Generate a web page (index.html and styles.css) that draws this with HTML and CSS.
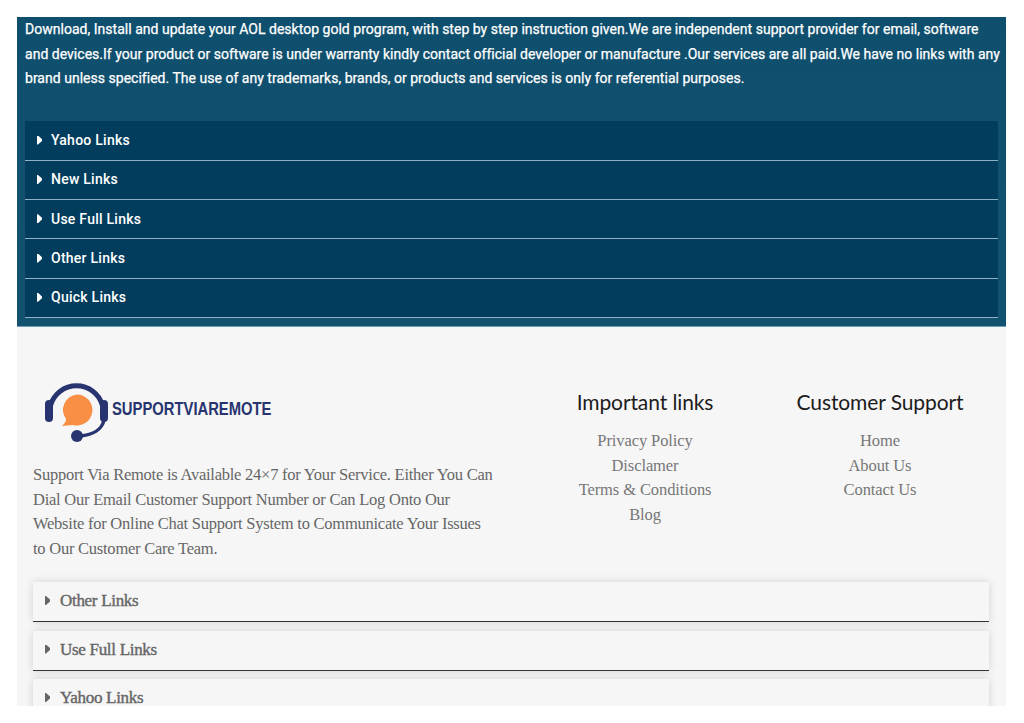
FILE: index.html
```html
<!DOCTYPE html>
<html lang="en">
<head>
<meta charset="utf-8">
<title>Support Via Remote</title>
<link rel="stylesheet" href="styles.css">
</head>
<body>
<div class="page">
  <section class="notice">
    <p class="notice-text">Download, Install and update your AOL desktop gold program, with step by step instruction given.We are independent support provider for email, software and devices.If your product or software is under warranty kindly contact official developer or manufacture .Our services are all paid.We have no links with any brand unless specified. The use of any trademarks, brands, or products and services is only for referential purposes.</p>
    <div class="dark-acc">
      <div class="dark-item"><span class="caret"></span>Yahoo Links</div>
      <div class="dark-item"><span class="caret"></span>New Links</div>
      <div class="dark-item"><span class="caret"></span>Use Full Links</div>
      <div class="dark-item"><span class="caret"></span>Other Links</div>
      <div class="dark-item"><span class="caret"></span>Quick Links</div>
    </div>
  </section>
  <footer class="footer">
    <div class="footer-top">
      <div class="about">
        <svg class="logo" viewBox="0 0 260 64" width="260" height="64" role="img" aria-label="Support Via Remote logo">
          <path d="M6.5 22.5 A27 27 0 0 1 58.5 22.5" fill="none" stroke="#27346f" stroke-width="5"/>
          <rect x="1" y="17" width="8" height="22" rx="4" fill="#27346f"/>
          <rect x="56" y="17" width="8" height="22" rx="4" fill="#27346f"/>
          <path d="M60 37 C58 47 48 52 36 53" fill="none" stroke="#27346f" stroke-width="3.5"/>
          <circle cx="33" cy="53" r="6" fill="#27346f"/>
          <path d="M33 11.5 A15.5 15.5 0 1 1 29 42 L18 43 C21 40 22 38 22 36 A15.5 15.5 0 0 1 33 11.5 Z" fill="#f98e45"/>
          <text class="logo-text" transform="translate(68 32) scale(1 1.3)">SUPPORTVIAREMOTE</text>
        </svg>
        <p class="about-text">Support Via Remote is Available 24×7 for Your Service. Either You Can Dial Our Email Customer Support Number or Can Log Onto Our Website for Online Chat Support System to Communicate Your Issues to Our Customer Care Team.</p>
      </div>
      <nav class="links">
        <h3 class="links-title">Important links</h3>
        <a class="link">Privacy Policy</a>
        <a class="link">Disclamer</a>
        <a class="link">Terms &amp; Conditions</a>
        <a class="link">Blog</a>
      </nav>
      <nav class="links">
        <h3 class="links-title">Customer Support</h3>
        <a class="link">Home</a>
        <a class="link">About Us</a>
        <a class="link">Contact Us</a>
      </nav>
    </div>
    <div class="light-acc">
      <div class="light-item"><span class="caret caret-grey"></span>Other Links</div>
      <div class="light-item"><span class="caret caret-grey"></span>Use Full Links</div>
      <div class="light-item"><span class="caret caret-grey"></span>Yahoo Links</div>
    </div>
  </footer>
</div>
</body>
</html>
```

FILE: styles.css
```css
* { box-sizing: border-box; }
html, body { margin: 0; padding: 0; background: #fff; }
body { padding: 17px 18px 17px 17px; height: 723px; overflow: hidden; }
.page { height: 689px; overflow: hidden; }

.notice {
  height: 310px;
  padding: 0 8px;
  background: linear-gradient(180deg, #0f4f6e 0%, #13526f 100%);
  border-bottom: 1px solid #6f9ab3;
}
.notice-text {
  margin: 0 -6px 0 0;
  height: 104.4px;
  font: 400 14px/24.5px Roboto, sans-serif;
  letter-spacing: 0.02px;
  -webkit-text-stroke: 0.25px #fff;
  color: #fff;
}
.dark-acc { display: flex; flex-direction: column; }
.dark-item {
  height: 39.33px;
  display: flex;
  align-items: center;
  padding: 0 0 1px 12px;
  background: #033d5d;
  border-bottom: 1px solid #8fb0c6;
  font: 500 14px/1 Roboto, sans-serif;
  letter-spacing: 0.25px;
  color: #fff;
}
.caret {
  width: 5px;
  height: 9px;
  margin-right: 9px;
  background: #fff;
  clip-path: polygon(0 0, 20% 0, 100% 40%, 100% 60%, 20% 100%, 0 100%);
}
.caret-grey { background: #666; margin-right: 10px; }

.footer { background: #f6f6f6; padding: 0 17px 0 16px; height: 379px; overflow: hidden; }
.footer-top {
  display: grid;
  grid-template-columns: 494.5px 235px 235px;
  padding-top: 51px;
}
.logo { display: block; margin: 5px 0 0 11px; }
.logo-text {
  font: 700 14.8px "Liberation Sans", sans-serif;
  fill: #27346f;
}
.about-text {
  margin: 16px 0 0;
  width: 462px;
  font: 400 16.5px/24.5px "Liberation Serif", serif;
  letter-spacing: -0.24px;
  color: #666;
}
.links { display: flex; flex-direction: column; align-items: center; }
.links-title {
  margin: 9px 0 12px;
  font: 400 21px/30px Lato, sans-serif;
  letter-spacing: -0.1px;
  color: #1c1c1c;
}
.link {
  font: 400 16.5px/24.5px "Liberation Serif", serif;
  letter-spacing: -0.1px;
  color: #777;
}
.light-acc { display: flex; flex-direction: column; gap: 8.5px; margin-top: 21px; }
.light-item {
  flex: none;
  height: 40px;
  display: flex;
  align-items: center;
  padding: 0 0 2px 12px;
  background: #f6f6f6;
  border-bottom: 1px solid #333;
  box-shadow: 0 0 8px rgba(0, 0, 0, 0.15);
  font: 400 17px/1 "Liberation Serif", serif;
  letter-spacing: -0.3px;
  -webkit-text-stroke: 0.4px #666;
  color: #666;
}
```
